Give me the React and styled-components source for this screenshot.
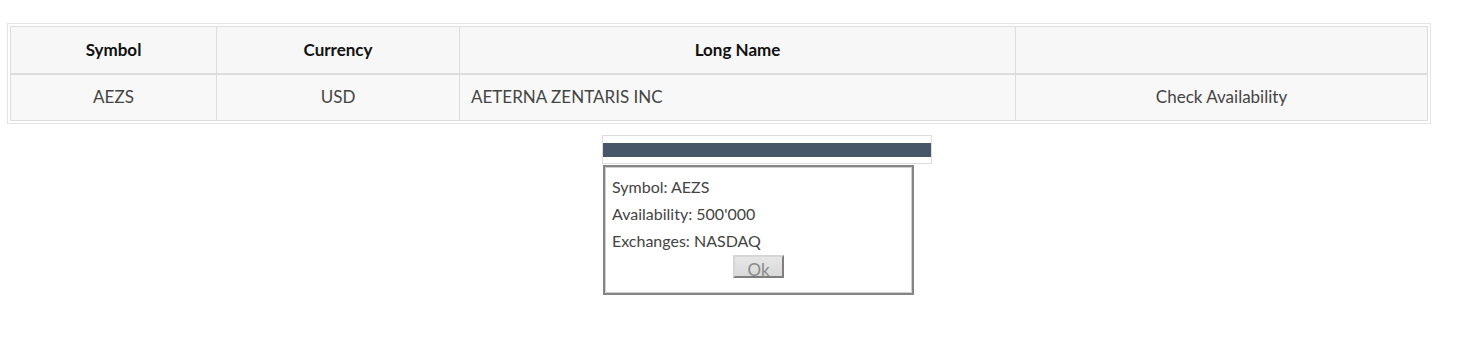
import React from 'react';
import styled, { createGlobalStyle } from 'styled-components';

const GlobalStyle = createGlobalStyle`
  html, body {
    margin: 0;
    padding: 0;
    background: #ffffff;
    font-family: Lato, "Open Sans", Arial, sans-serif;
  }
`;

const Page = styled.div`
  width: 1479px;
  height: 342px;
  padding-top: 23px;
  box-sizing: border-box;
`;

const TableFrame = styled.div`
  display: inline-block;
  margin-left: 7px;
  border: 1px solid #e4e4e4;
  padding: 2px;
`;

const Grid = styled.table`
  border-collapse: collapse;
  font-size: 17px;
`;

const Head = styled.th`
  width: ${p => p.$w}px;
  height: 44px;
  padding: 0 0 2px;
  border: 1px solid #dddddd;
  border-bottom-width: 2px;
  background: #f7f7f7;
  color: #111111;
  font-weight: 700;
  text-align: center;
`;

const Cell = styled.td`
  height: 42px;
  padding: 0 11px 3px;
  border: 1px solid #dddddd;
  background: #f8f8f8;
  color: #444444;
  text-align: ${p => p.$align || 'center'};
`;

const Popup = styled.div`
  margin: 8px 0 0 602px;
  width: 330px;
`;

const TitleFrame = styled.div`
  height: 29px;
  box-sizing: border-box;
  border: 1px solid #dddddd;
  padding-top: 7px;
`;

const TitleBar = styled.div`
  height: 14px;
  background: #475769;
`;

const Body = styled.div`
  margin: 1px 0 0 1px;
  width: 311px;
  height: 130px;
  box-sizing: border-box;
  border: 2px solid #858585;
  box-shadow: inset 0 0 0 1px #cfcfcf;
  padding: 6px 0 0 7px;
  color: #444444;
  font-size: 16px;
`;

const Line = styled.div`
  line-height: 27px;
`;

const ButtonRow = styled.div`
  display: flex;
  justify-content: center;
  padding-right: 7px;
  margin-top: 1px;
`;

const OkButton = styled.button`
  width: 51px;
  height: 23px;
  box-sizing: border-box;
  border: 2px solid;
  border-color: #d6d6d6 #7e7e7e #7e7e7e #d6d6d6;
  background: linear-gradient(#e6e6e6, #d9d9d9);
  color: #8a8a8a;
  font-family: inherit;
  font-size: 17px;
  padding: 3px 0 0;
  line-height: 20px;
  overflow: hidden;
`;

const columns = [
  { label: 'Symbol', w: 205 },
  { label: 'Currency', w: 242 },
  { label: 'Long Name', w: 555 },
  { label: '', w: 411 },
];

export default function App() {
  return (
    <Page>
      <GlobalStyle />
      <TableFrame>
        <Grid>
          <thead>
            <tr>
              {columns.map(c => (
                <Head key={c.w} $w={c.w}>{c.label}</Head>
              ))}
            </tr>
          </thead>
          <tbody>
            <tr>
              <Cell>AEZS</Cell>
              <Cell>USD</Cell>
              <Cell $align="left">AETERNA ZENTARIS INC</Cell>
              <Cell>Check Availability</Cell>
            </tr>
          </tbody>
        </Grid>
      </TableFrame>
      <Popup>
        <TitleFrame>
          <TitleBar />
        </TitleFrame>
        <Body>
          <Line>Symbol: AEZS</Line>
          <Line>Availability: 500'000</Line>
          <Line>Exchanges: NASDAQ</Line>
          <ButtonRow>
            <OkButton>Ok</OkButton>
          </ButtonRow>
        </Body>
      </Popup>
    </Page>
  );
}
